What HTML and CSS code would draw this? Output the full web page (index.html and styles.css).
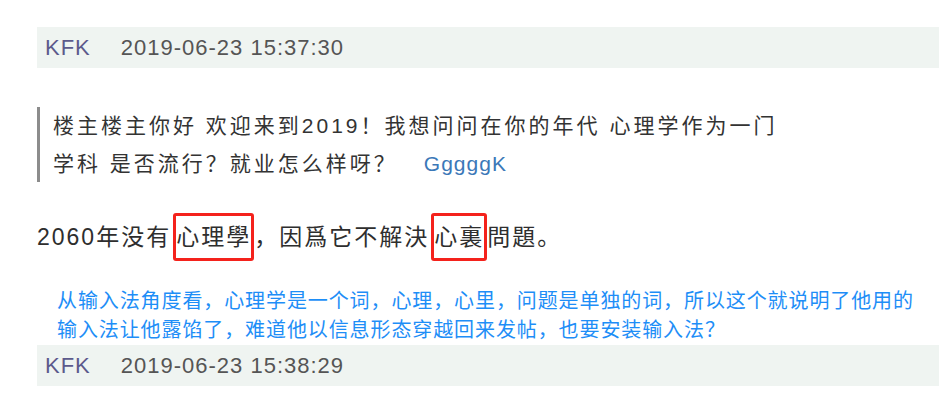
FILE: index.html
```html
<!DOCTYPE html>
<html lang="zh-CN">
<head>
  <meta charset="UTF-8">
  <meta name="viewport" content="width=device-width, initial-scale=1.0">
  <title>KFK</title>
  <link rel="stylesheet" href="styles.css">
</head>
<body>
  <div id="thread">
    <div class="post-head">
      <span class="author">KFK</span>
      <span class="time">2019-06-23 15:37:30</span>
    </div>

    <blockquote class="quote">
      楼主楼主你好 欢迎来到2019！我想问问在你的年代 心理学作为一门<br>
      学科 是否流行？就业怎么样呀？<a class="quote-user" href="#">GggggK</a>
    </blockquote>

    <p class="reply">2060年没有<span class="mark">心理學</span>，因爲它不解決<span class="mark">心裏</span>問題。</p>

    <p class="note">从输入法角度看，心理学是一个词，心理，心里，问题是单独的词，所以这个就说明了他用的<br>输入法让他露馅了，难道他以信息形态穿越回来发帖，也要安装输入法？</p>

    <div class="post-head">
      <span class="author">KFK</span>
      <span class="time">2019-06-23 15:38:29</span>
    </div>
  </div>
</body>
</html>
```

FILE: styles.css
```css
body {
  margin: 0;
  padding: 0;
  background-color: #fff;
  font-family: "Liberation Sans", "Noto Sans CJK SC", sans-serif;
}

#thread {
  padding: 27px 0 0 37px;
}

.post-head {
  display: flex;
  align-items: center;
  gap: 30px;
  height: 41px;
  padding-left: 8px;
  background-color: #eff4f1;
  font-size: 22px;
  letter-spacing: 1px;
}

.author {
  color: #5c5a8c;
}

.time {
  color: #555;
}

.quote {
  margin: 39px 0 0 0;
  padding-left: 13px;
  border-left: 3px solid #8c8c8c;
  font-size: 21px;
  line-height: 37.5px;
  letter-spacing: 3px;
  color: #333;
}

.quote-user {
  margin-left: 26px;
  color: #3b78b8;
  text-decoration: none;
  letter-spacing: 1px;
}

.reply {
  margin: 31px 0 0 0;
  font-size: 23px;
  line-height: 48px;
  letter-spacing: 2px;
  color: #2e2e2e;
}

.mark {
  display: inline-block;
  vertical-align: top;
  line-height: 42px;
  margin-left: 2px;
  border: 3px solid #f4221c;
  border-radius: 3px;
}

.note {
  margin: 26px 0 0 20px;
  font-size: 20px;
  line-height: 29px;
  letter-spacing: 0.9px;
  color: #1e8ef7;
}
```
